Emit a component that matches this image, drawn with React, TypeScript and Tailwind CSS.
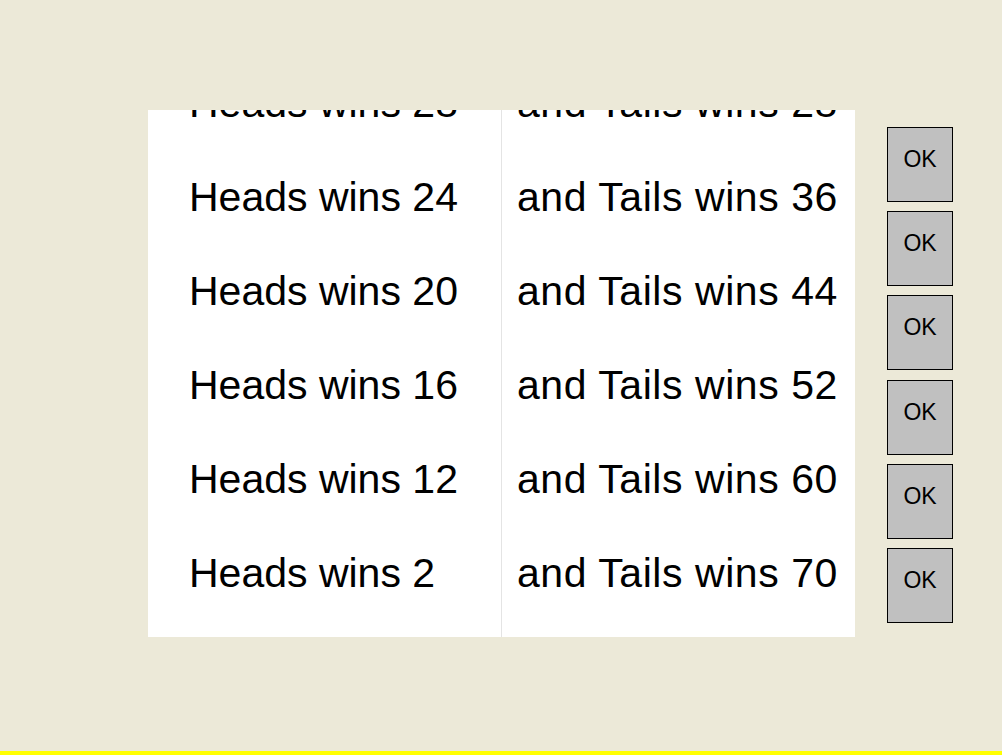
import React from "react";

const heads = [28, 24, 20, 16, 12, 2];
const tails = [28, 36, 44, 52, 60, 70];

export default function App() {
  return (
    <div
      className="flex h-[755px] w-full flex-col bg-[#ECE9D8]"
      style={{ fontFamily: '"Liberation Sans", Arial, sans-serif' }}
    >
      <div className="flex flex-1 items-start pl-[148px] pt-[110px]">
        <div className="flex h-[527px] w-[707px] overflow-hidden bg-white">
          <div className="w-[354px] border-r border-[#e4e4e4]">
            <div className="-mt-[54px] flex flex-col">
              {heads.map((h, i) => (
                <div
                  key={i}
                  className="h-[94px] whitespace-nowrap pl-[41px] text-[41px] leading-[94px] text-black"
                >
                  Heads wins {h}
                </div>
              ))}
            </div>
          </div>
          <div className="flex-1">
            <div className="-mt-[54px] flex flex-col">
              {tails.map((t, i) => (
                <div
                  key={i}
                  className="h-[94px] whitespace-nowrap pl-[15px] text-[41px] leading-[94px] tracking-[0.55px] text-black"
                >
                  and Tails wins {t}
                </div>
              ))}
            </div>
          </div>
        </div>
        <div className="ml-[32px] mt-[17px] flex flex-col gap-[9.2px]">
          {heads.map((_, i) => (
            <div
              key={i}
              className="h-[75px] w-[66px] border border-black bg-[#c0c0c0] pt-[18px] text-center text-[23px] leading-[26px] text-black"
            >
              OK
            </div>
          ))}
        </div>
      </div>
      <div className="h-[4px] w-full bg-[#ffff00]" />
    </div>
  );
}
